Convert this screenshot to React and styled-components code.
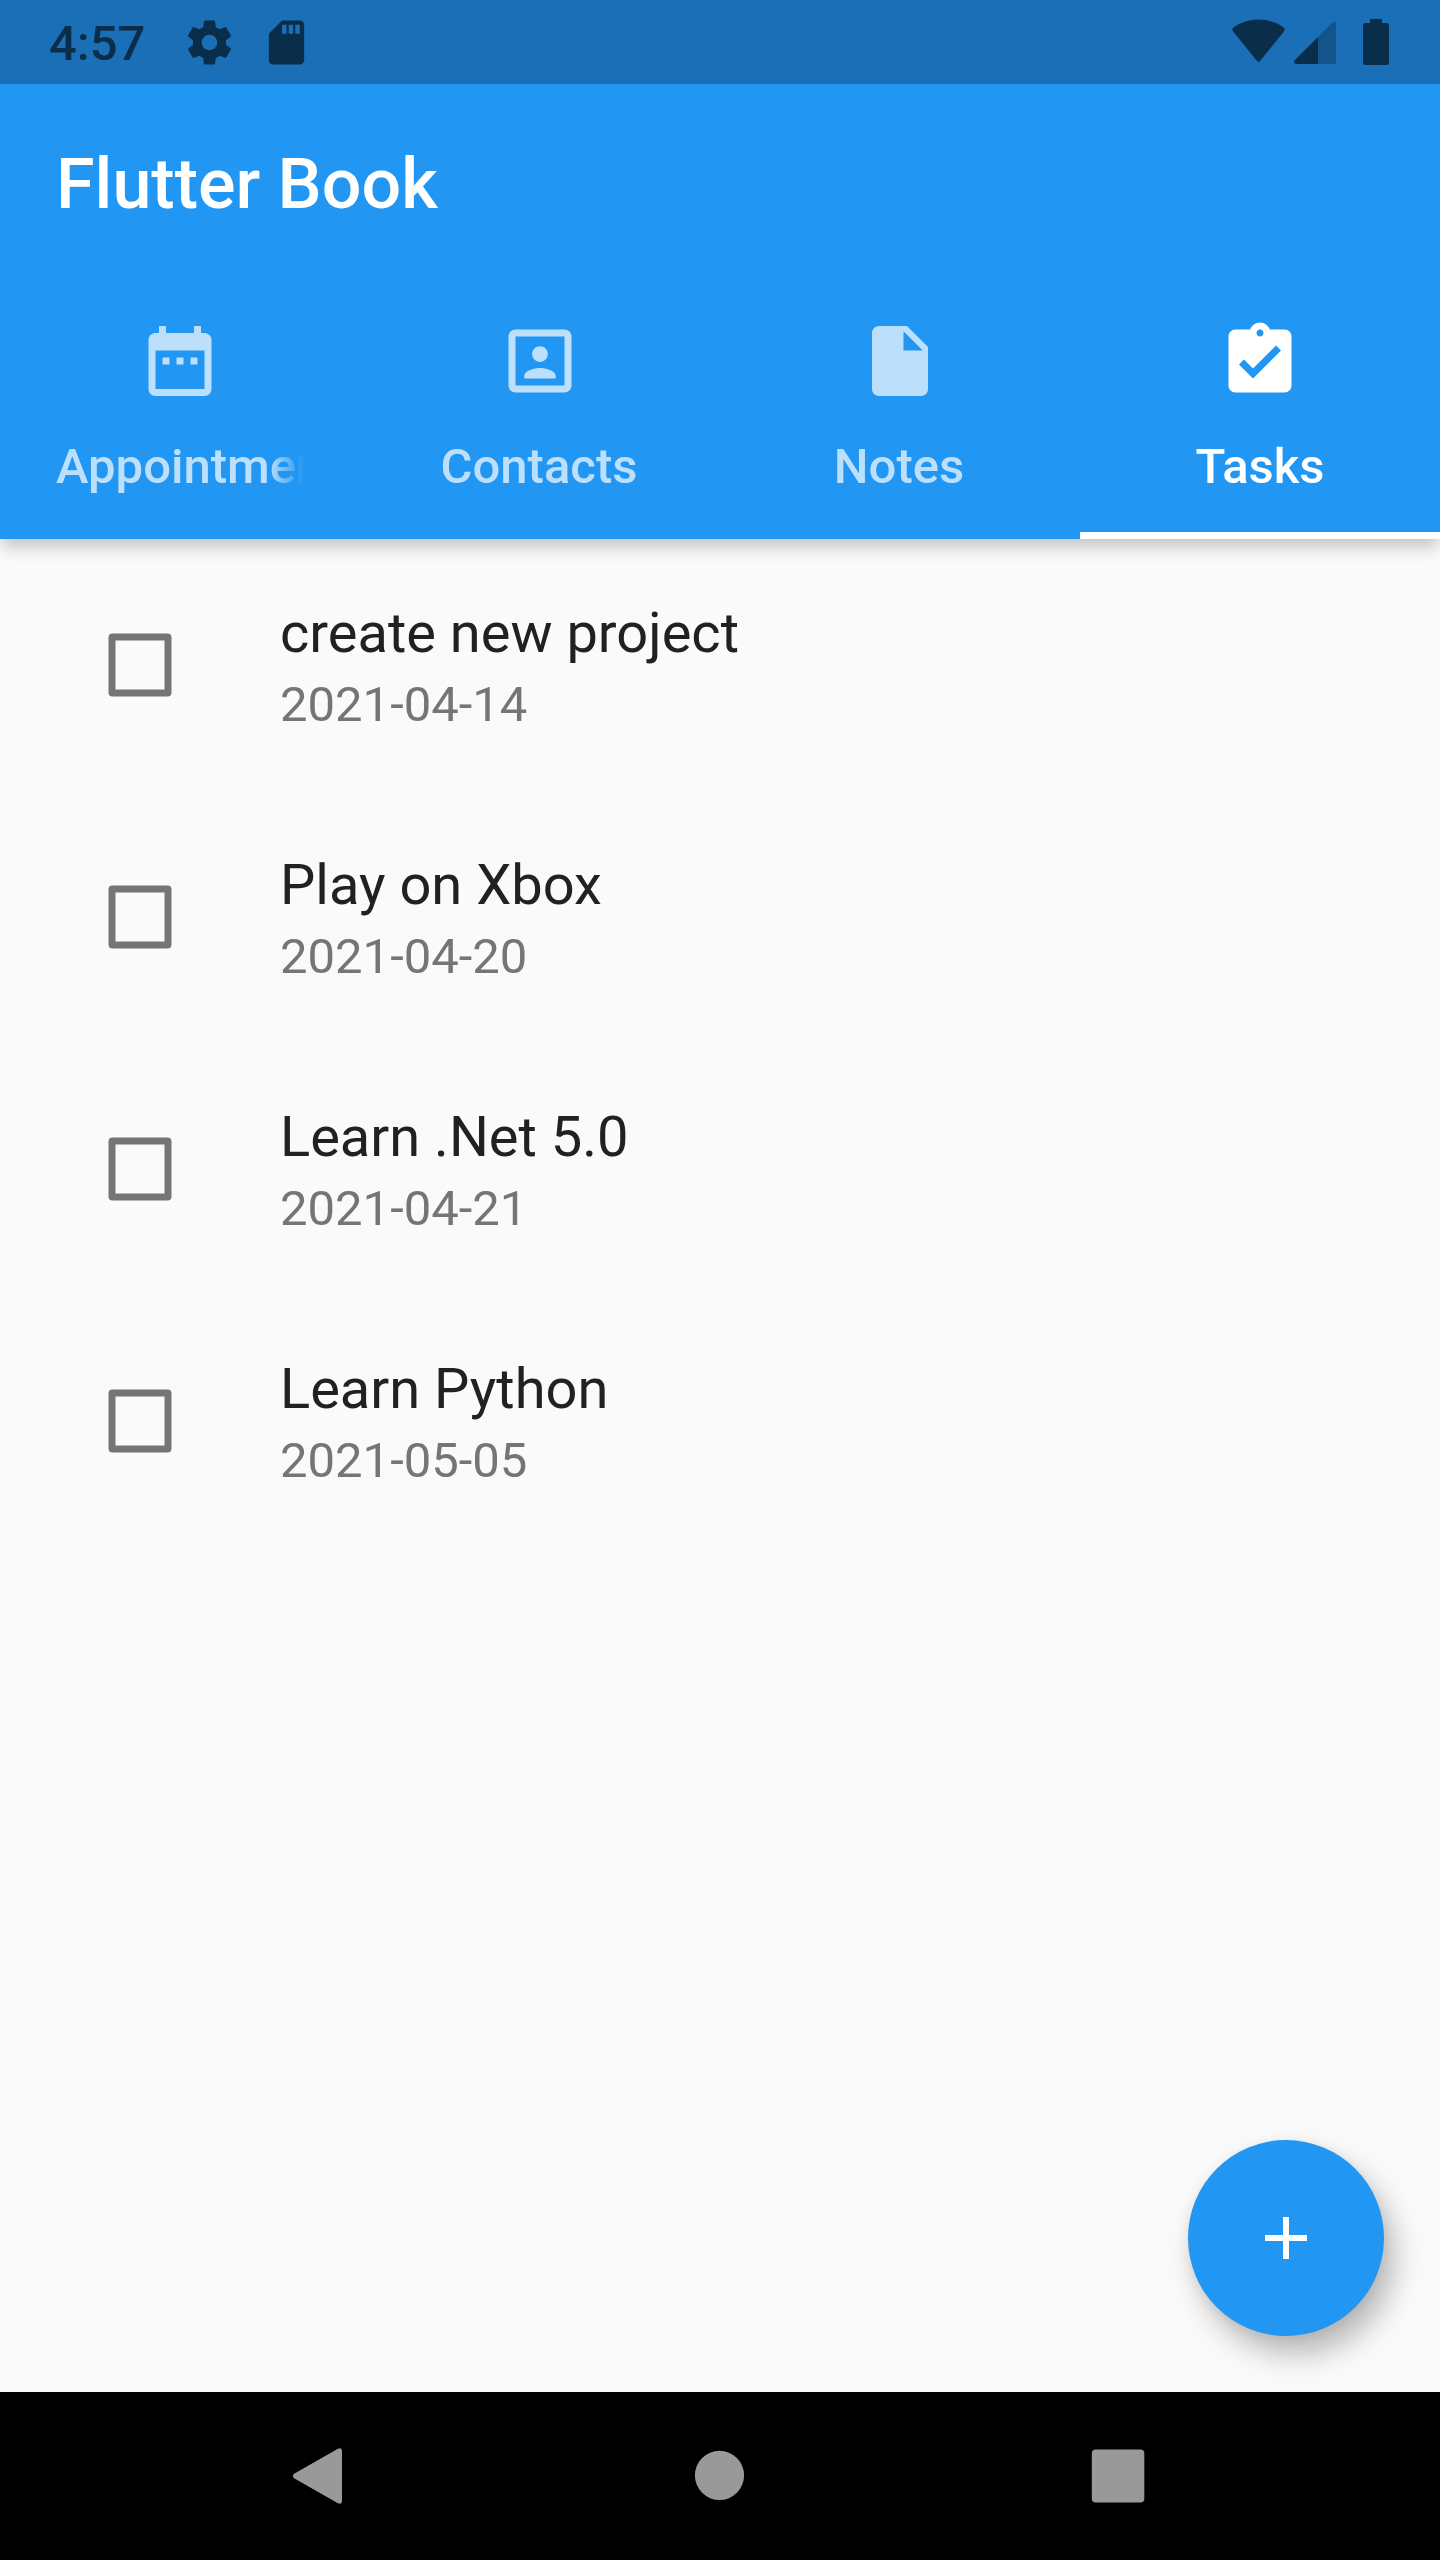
import React from "react";
import styled, { createGlobalStyle } from "styled-components";

const GlobalStyle = createGlobalStyle`
  * { box-sizing: border-box; }
  body { margin: 0; background: #fafafa; }
`;

const Screen = styled.div`
  width: 1440px;
  height: 2560px;
  display: flex;
  flex-direction: column;
  position: relative;
  overflow: hidden;
  background: #fafafa;
  font-family: Roboto, "Liberation Sans", sans-serif;
`;

const StatusBar = styled.div`
  height: 84px;
  flex: none;
  display: flex;
  align-items: center;
  padding: 0 51px 0 49px;
  background: #1a6fb6;
  color: #0a2d49;
`;

const Clock = styled.span`
  width: 134px;
  font-size: 49px;
  line-height: 58px;
  font-weight: 500;
  padding-top: 4px;
`;

const StatusIcon = styled.svg`
  display: block;
  flex: none;
  width: ${(p) => p.$w}px;
  height: ${(p) => p.$h}px;
  margin-left: ${(p) => p.$gap || 0}px;
  fill: currentColor;
`;

const Spacer = styled.div`
  flex: 1;
`;

const Header = styled.header`
  flex: none;
  height: 455px;
  display: flex;
  flex-direction: column;
  background: #2196f3;
  color: #fff;
  box-shadow: 0 10px 16px -2px rgba(0, 0, 0, 0.22);
`;

const Title = styled.h1`
  margin: 0;
  height: 196px;
  padding: 4px 0 0 56px;
  display: flex;
  align-items: center;
  font-size: 70px;
  font-weight: 500;
`;

const TabBar = styled.nav`
  flex: 1;
  display: grid;
  grid-template-columns: repeat(4, 1fr);
`;

const Tab = styled.div`
  display: flex;
  flex-direction: column;
  align-items: center;
  padding: 39px 56px 0;
  color: ${(p) => (p.$active ? "#fff" : "rgba(255, 255, 255, 0.7)")};
  border-bottom: 7px solid ${(p) => (p.$active ? "#fff" : "transparent")};
`;

const TabIcon = styled.svg`
  display: block;
  flex: none;
  width: 84px;
  height: 84px;
  fill: currentColor;
`;

const TabLabel = styled.span`
  margin-top: 35px;
  max-width: 248px;
  padding-right: ${(p) => p.$trail || 0}px;
  overflow: hidden;
  white-space: nowrap;
  font-size: 49px;
  line-height: 58px;
  font-weight: 500;
  ${(p) => p.$fade && "mask-image: linear-gradient(to right, #000 calc(100% - 36px), transparent);"}
`;

const List = styled.ul`
  flex: 1;
  margin: 0;
  padding: 0;
  list-style: none;
`;

const Row = styled.li`
  height: 252px;
  display: flex;
  align-items: center;
  padding-left: 108px;
`;

const Checkbox = styled.svg`
  display: block;
  width: 64px;
  height: 64px;
  margin-right: 108px;
  fill: none;
  stroke: #757575;
  stroke-width: 7;
`;

const Texts = styled.div`
  display: flex;
  flex-direction: column;
  padding-top: 4px;
`;

const TaskName = styled.span`
  font-size: 56px;
  line-height: 66px;
  color: #212121;
`;

const TaskDate = styled.span`
  margin-top: 10px;
  font-size: 49px;
  line-height: 58px;
  color: #757575;
`;

const Fab = styled.button`
  position: absolute;
  right: 56px;
  bottom: 224px;
  width: 196px;
  height: 196px;
  padding: 0;
  border: 0;
  border-radius: 50%;
  display: flex;
  align-items: center;
  justify-content: center;
  background: #2196f3;
  box-shadow: 10px 18px 30px rgba(0, 0, 0, 0.27), 0 2px 12px rgba(0, 0, 0, 0.06);
`;

const FabIcon = styled.svg`
  width: 72px;
  height: 72px;
  display: block;
  fill: #fff;
`;

const NavBar = styled.footer`
  flex: none;
  height: 168px;
  display: flex;
  align-items: center;
  justify-content: space-between;
  padding: 0 294px 0 291px;
  background: #000;
`;

const NavIcon = styled.svg`
  display: block;
  width: 56px;
  height: 60px;
  fill: #999;
`;

const tabs = [
  {
    label: "Appointments",
    fade: true,
    path: "M9 11H7v2h2v-2zm4 0h-2v2h2v-2zm4 0h-2v2h2v-2zm2-7h-1V2h-2v2H8V2H6v2H5c-1.11 0-1.99.9-1.99 2L3 20c0 1.1.89 2 2 2h14c1.1 0 2-.9 2-2V6c0-1.1-.9-2-2-2zm0 16H5V9h14v11z",
  },
  {
    label: "Contacts",
    trail: 2,
    path: "M12 12.25c1.24 0 2.25-1.01 2.25-2.25S13.24 7.75 12 7.75 9.75 8.76 9.75 10s1.01 2.25 2.25 2.25zm4.5 4c0-1.5-3-2.25-4.5-2.25s-4.5.75-4.5 2.25V17h9v-.75zM19 3H5c-1.11 0-2 .9-2 2v14c0 1.1.89 2 2 2h14c1.1 0 2-.9 2-2V5c0-1.1-.9-2-2-2zm0 16H5V5h14v14z",
  },
  {
    label: "Notes",
    trail: 2,
    path: "M6 2c-1.1 0-1.99.9-1.99 2L4 20c0 1.1.89 2 1.99 2H18c1.1 0 2-.9 2-2V8l-6-6H6zm7 7V3.5L18.5 9H13z",
  },
  {
    label: "Tasks",
    active: true,
    path: "M19 3h-4.18C14.4 1.84 13.3 1 12 1c-1.3 0-2.4.84-2.82 2H5c-1.1 0-2 .9-2 2v14c0 1.1.9 2 2 2h14c1.1 0 2-.9 2-2V5c0-1.1-.9-2-2-2zm-7 0c.55 0 1 .45 1 1s-.45 1-1 1-1-.45-1-1 .45-1 1-1zm-2 14l-4-4 1.41-1.41L10 14.17l6.59-6.59L18 9l-8 8z",
  },
];

const tasks = [
  { name: "create new project", date: "2021-04-14" },
  { name: "Play on Xbox", date: "2021-04-20" },
  { name: "Learn .Net 5.0", date: "2021-04-21" },
  { name: "Learn Python", date: "2021-05-05" },
];

const GEAR =
  "M19.43 12.98c.04-.32.07-.64.07-.98s-.03-.66-.07-.98l2.11-1.65c.19-.15.24-.42.12-.64l-2-3.46c-.12-.22-.39-.3-.61-.22l-2.49 1c-.52-.4-1.08-.73-1.69-.98l-.38-2.65C14.46 2.18 14.25 2 14 2h-4c-.25 0-.46.18-.49.42l-.38 2.65c-.61.25-1.17.59-1.69.98l-2.49-1c-.23-.09-.49 0-.61.22l-2 3.46c-.13.22-.07.49.12.64l2.11 1.65c-.04.32-.07.65-.07.98s.03.66.07.98l-2.11 1.65c-.19.15-.24.42-.12.64l2 3.46c.12.22.39.3.61.22l2.49-1c.52.4 1.08.73 1.69.98l.38 2.65c.03.24.24.42.49.42h4c.25 0 .46-.18.49-.42l.38-2.65c.61-.25 1.17-.59 1.69-.98l2.49 1c.23.09.49 0 .61-.22l2-3.46c.12-.22.07-.49-.12-.64l-2.11-1.65zM12 15.5c-1.93 0-3.5-1.57-3.5-3.5s1.57-3.5 3.5-3.5 3.5 1.57 3.5 3.5-1.57 3.5-3.5 3.5z";

const SD_CARD =
  "M18 2h-8L4.02 8 4 20c0 1.1.9 2 2 2h12c1.1 0 2-.9 2-2V4c0-1.1-.9-2-2-2zm-6 6h-2V4h2v4zm3 0h-2V4h2v4zm3 0h-2V4h2v4z";

export default function App() {
  return (
    <Screen>
      <GlobalStyle />
      <StatusBar>
        <Clock>4:57</Clock>
        <StatusIcon $w={53} $h={53} viewBox="0 0 24 24">
          <path d={GEAR} />
        </StatusIcon>
        <StatusIcon $w={53} $h={53} $gap={24} viewBox="0 0 24 24">
          <path d={SD_CARD} />
        </StatusIcon>
        <Spacer />
        <StatusIcon $w={54} $h={84} viewBox="0 0 54 84">
          <path d="M.8 31Q-.6 29 1.2 27.400Q13 19.500 26.500 19.500T51.800 27.400Q53.600 29 52.200 31L28.100 61Q26.500 63 24.900 61Z" />
        </StatusIcon>
        <StatusIcon $w={42} $h={84} $gap={8} viewBox="0 0 42 84">
          <path d="M38.200 22.800Q42 20 42 24.500V61.500Q42 64 39.500 64H24V37Z" opacity="0.4" />
          <path d="M24 37V64H2.500Q-1.500 63.500.6 60.200Z" />
        </StatusIcon>
        <StatusIcon $w={26} $h={84} $gap={27} viewBox="0 0 26 84">
          <path d="M7 19H19V23H23.500Q26 23 26 25.500V62.500Q26 65 23.500 65H2.500Q0 65 0 62.500V25.500Q0 23 2.500 23H7Z" />
        </StatusIcon>
      </StatusBar>

      <Header>
        <Title>Flutter Book</Title>
        <TabBar>
          {tabs.map((t) => (
            <Tab key={t.label} $active={t.active}>
              <TabIcon viewBox="0 0 24 24">
                <path d={t.path} />
              </TabIcon>
              <TabLabel $fade={t.fade} $trail={t.trail}>
                {t.label}
              </TabLabel>
            </Tab>
          ))}
        </TabBar>
      </Header>

      <List>
        {tasks.map((t) => (
          <Row key={t.name}>
            <Checkbox viewBox="0 0 64 64">
              <rect x="4" y="4" width="56" height="56" rx="0.5" />
            </Checkbox>
            <Texts>
              <TaskName>{t.name}</TaskName>
              <TaskDate>{t.date}</TaskDate>
            </Texts>
          </Row>
        ))}
      </List>

      <Fab aria-label="Add task">
        <FabIcon viewBox="0 0 24 24">
          <path d="M19 13h-6v6h-2v-6H5v-2h6V5h2v6h6v2z" />
        </FabIcon>
      </Fab>

      <NavBar>
        <NavIcon viewBox="0 0 56 60">
          <path d="M3.500 32.500Q0 30 3.500 27.500L46.500 3Q51 1 51 5V55Q51 59 46.500 57Z" />
        </NavIcon>
        <NavIcon viewBox="0 0 56 60">
          <circle cx="28.500" cy="29.400" r="24.600" />
        </NavIcon>
        <NavIcon viewBox="0 0 56 60">
          <rect x="1.800" y="3.600" width="52.500" height="52.800" rx="4" />
        </NavIcon>
      </NavBar>
    </Screen>
  );
}
